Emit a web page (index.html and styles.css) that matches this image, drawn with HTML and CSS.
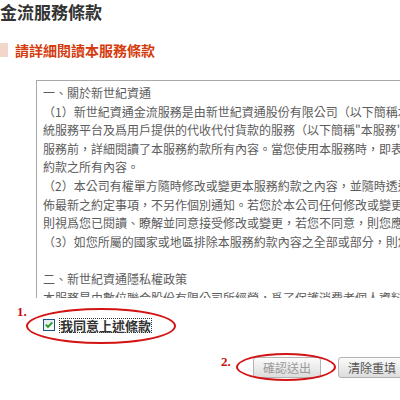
FILE: index.html
```html
<!DOCTYPE html>
<html lang="zh-Hant">
<head>
<meta charset="utf-8">
<title>金流服務條款</title>
<link rel="stylesheet" href="styles.css">
</head>
<body>
<div class="page">
  <h1 class="title">金流服務條款</h1>
  <div class="sec-head"><span class="sec-mark"></span><span class="sec-text">請詳細閱讀本服務條款</span></div>
  <div class="terms">
    <div class="ln">一、關於新世紀資通</div>
    <div class="ln">（1）新世紀資通金流服務是由新世紀資通股份有限公司（以下簡稱本公司）所提供之金流系</div>
    <div class="ln">統服務平台及爲用戶提供的代收代付貨款的服務（以下簡稱"本服務"），用戶於使用本</div>
    <div class="ln">服務前，詳細閱讀了本服務約款所有內容。當您使用本服務時，即表示您已閱讀</div>
    <div class="ln">約款之所有內容。</div>
    <div class="ln">（2）本公司有權單方隨時修改或變更本服務約款之內容，並隨時透過網站公</div>
    <div class="ln">佈最新之約定事項，不另作個別通知。若您於本公司任何修改或變更後繼續</div>
    <div class="ln">則視爲您已閱讀、瞭解並同意接受修改或變更，若您不同意，則您應立即停止</div>
    <div class="ln">（3）如您所屬的國家或地區排除本服務約款內容之全部或部分，則您應立即</div>
    <div class="ln"></div>
    <div class="ln">二、新世紀資通隱私權政策</div>
    <div class="ln">本服務是由數位聯合股份有限公司所經營，爲了保護消費者個人資料</div>
  </div>
  <div class="agree">
    <span class="num num1">1.</span>
    <label class="agree-label">
      <svg class="cb" width="12" height="12" viewBox="0 0 12 12">
        <defs>
          <linearGradient id="cbg" x1="0" y1="0" x2="1" y2="1">
            <stop offset="0" stop-color="#dfe6ee"/>
            <stop offset="1" stop-color="#ffffff"/>
          </linearGradient>
        </defs>
        <rect x="0.5" y="0.5" width="11" height="11" fill="url(#cbg)" stroke="#1d5281"/>
        <path d="M2.8 5.6 L5 7.9 L9.3 3.4" fill="none" stroke="#21a121" stroke-width="2"/>
      </svg>
      <span class="agree-text">我同意上述條款</span>
    </label>
    <span class="ring ring1"></span>
  </div>
  <div class="actions">
    <span class="num num2">2.</span>
    <button class="btn btn-off" type="button">確認送出</button>
    <button class="btn" type="button">清除重填</button>
    <span class="ring ring2"></span>
  </div>
</div>
</body>
</html>
```
FILE: styles.css
```css
html, body {
  margin: 0;
  padding: 0;
  overflow: hidden;
  background: #ffffff;
}

body {
  font-family: "Noto Sans CJK TC", "Noto Sans", sans-serif;
}

.page {
  width: 400px;
  height: 400px;
}

.title {
  margin: 0;
  padding-top: 2px;
  height: 20px;
  font-size: 17px;
  line-height: 20px;
  font-weight: bold;
  color: #333333;
  white-space: nowrap;
}

.sec-head {
  margin-top: 20px;
  height: 16px;
  display: flex;
  align-items: center;
}

.sec-mark {
  width: 8px;
  height: 14px;
  background: #f2d6cc;
  margin-right: 7px;
}

.sec-text {
  font-size: 14px;
  line-height: 16px;
  font-weight: bold;
  color: #d53a0b;
  white-space: nowrap;
}

.terms {
  margin-top: 22px;
  margin-left: 36px;
  width: 420px;
  height: 218px;
  box-sizing: border-box;
  border-top: 1px solid #a8a8a8;
  border-left: 1px solid #a8a8a8;
  padding: 3px 0 0 6px;
  overflow: hidden;
}

.ln {
  height: 18.6px;
  font-size: 12px;
  line-height: 18.6px;
  color: #5c5c5c;
  white-space: nowrap;
}

.agree {
  position: relative;
  margin-top: 20px;
  height: 14px;
  padding-left: 43px;
  display: flex;
  align-items: center;
}

.agree-label {
  display: flex;
  align-items: center;
  gap: 5px;
}

.cb {
  display: block;
  flex-shrink: 0;
}

.agree-text {
  font-size: 13px;
  line-height: 13px;
  font-weight: bold;
  color: #333333;
  outline: 1px dotted #333333;
  white-space: nowrap;
}

.num {
  position: absolute;
  font-family: "Liberation Serif", serif;
  font-weight: bold;
  font-size: 13px;
  line-height: 12px;
  color: #c80f0f;
}

.num1 {
  left: 17px;
  top: -12px;
}

.num2 {
  left: 221px;
  top: -1px;
}

.ring {
  position: absolute;
  border: 2.5px solid #d41414;
  border-radius: 50%;
  box-sizing: border-box;
  pointer-events: none;
}

.ring1 {
  left: 26px;
  top: -10px;
  width: 150px;
  height: 36px;
}

.ring2 {
  left: 236px;
  top: -4px;
  width: 100px;
  height: 28px;
}

.actions {
  position: relative;
  margin-top: 25px;
  padding-left: 253px;
  display: flex;
  gap: 17px;
}

.btn {
  flex-shrink: 0;
  width: 68px;
  height: 21px;
  box-sizing: border-box;
  padding: 0;
  border: 1px solid #b3b3b3;
  border-radius: 3px;
  background: linear-gradient(#fbfbfb, #dddddd);
  font-family: "Noto Sans CJK TC", sans-serif;
  font-size: 12px;
  line-height: 19px;
  color: #555555;
}

.btn-off {
  color: #9a9a9a;
}
```
